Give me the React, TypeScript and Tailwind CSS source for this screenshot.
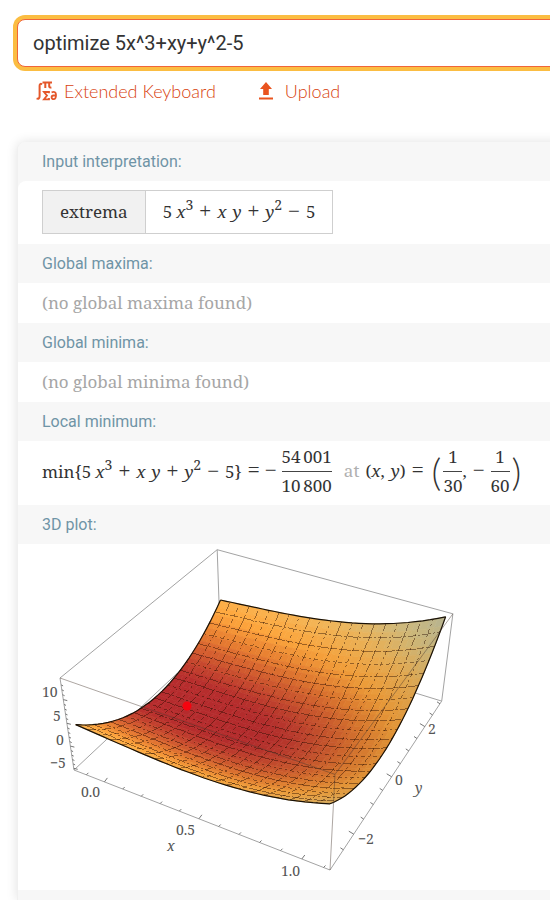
import type { ReactNode } from 'react';

/* ---------- surface plot ---------- */

const X_MIN = -0.17, X_SPAN = 1.3;
const Y_MIN = -3.12, Y_SPAN = 6.24;
const Z_MIN = -5.4, Z_SPAN = 19.8;

type Point = [number, number];

const f = (x: number, y: number) => 5 * x ** 3 + x * y + y * y - 5;

// perspective projection of the unit box
const project = (u: number, v: number, w: number): Point => {
  const d = 1 - 0.105 * u + 0.208 * v - 0.067 * w;
  return [
    (32 + 225.8 * u + 183.1 * v - 15.2 * w) / d,
    (226 + 65.8 * u - 118.5 * v - 101 * w) / d,
  ];
};

const onSurface = (u: number, v: number) => {
  const w = (f(X_MIN + u * X_SPAN, Y_MIN + v * Y_SPAN) - Z_MIN) / Z_SPAN;
  return { w, p: project(u, v, w) };
};

const STOPS: [number, number[]][] = [
  [0, [176, 40, 44]],
  [0.05, [180, 45, 44]],
  [0.13, [202, 82, 46]],
  [0.24, [228, 124, 48]],
  [0.37, [250, 164, 60]],
  [0.56, [244, 184, 90]],
  [0.75, [222, 198, 130]],
  [1, [200, 200, 166]],
];

const shade = (u: number, w: number) => {
  const t = Math.min(0.999, Math.max(0, w));
  const i = STOPS.findIndex(([s]) => s > t);
  const [s0, a] = STOPS[i - 1];
  const [s1, b] = STOPS[i];
  const k = (t - s0) / (s1 - s0);
  const light = 1.02 - 0.13 * u * u;
  return `rgb(${a.map((c, n) => Math.min(255, Math.round((c + (b[n] - c) * k) * light))).join(',')})`;
};

const N = 34;
const at = (i: number) => 0.02 + (0.96 * i) / N;
const pts = (list: Point[]) => list.map(([x, y]) => `${x.toFixed(1)},${y.toFixed(1)}`).join(' ');

const cells: { points: string; fill: string }[] = [];
for (let j = N - 1; j >= 0; j--) {
  for (let i = 0; i < N; i++) {
    const c = [
      onSurface(at(i), at(j)),
      onSurface(at(i + 1), at(j)),
      onSurface(at(i + 1), at(j + 1)),
      onSurface(at(i), at(j + 1)),
    ];
    cells.push({
      points: pts(c.map((q) => q.p)),
      fill: shade(at(i), c.reduce((s, q) => s + q.w, 0) / 4),
    });
  }
}

const steps = Array.from({ length: N + 1 }, (_, i) => at(i));
const alongX = (v: number) => pts(steps.map((u) => onSurface(u, v).p));
const alongY = (u: number) => pts(steps.map((v) => onSurface(u, v).p));
const mesh = Array.from({ length: 20 }, (_, i) => 0.02 + (0.96 * (i + 1)) / 21);
const DASHES = ['12 1 7 2', '9 2 2 2', '2 3 4 3'];

const tick = ([x, y]: Point, dx: number, dy: number) => `M${x.toFixed(1)} ${y.toFixed(1)}l${dx} ${dy}`;
const xTicks = Array.from({ length: 13 }, (_, i) => {
  const major = i % 5 === 1;
  return tick(project((i * 0.1 - 0.1 - X_MIN) / X_SPAN, 0, 0), major ? 3 : 2, major ? -4 : -2);
}).join('');
const yTicks = Array.from({ length: 12 }, (_, i) => {
  const major = i % 4 === 1;
  return tick(project(1, (i * 0.5 - 2.5 - Y_MIN) / Y_SPAN, 0), major ? -5 : -3, major ? -3 : -2);
}).join('');
const zTicks = Array.from({ length: 19 }, (_, i) =>
  tick(project(0, 0, (i - 5 - Z_MIN) / Z_SPAN), i % 5 === 0 ? 4 : 2, 1),
).join('');

const edge = (a: [number, number, number], b: [number, number, number]) => {
  const [x1, y1] = project(...a);
  const [x2, y2] = project(...b);
  return `M${x1.toFixed(1)} ${y1.toFixed(1)}L${x2.toFixed(1)} ${y2.toFixed(1)}`;
};

const box = [
  edge([0, 0, 0], [1, 0, 0]), edge([1, 0, 0], [1, 1, 0]), edge([1, 1, 0], [0, 1, 0]), edge([0, 1, 0], [0, 0, 0]),
  edge([1, 1, 1], [0, 1, 1]), edge([0, 1, 1], [0, 0, 1]),
  edge([0, 0, 0], [0, 0, 1]), edge([1, 1, 0], [1, 1, 1]), edge([0, 1, 0], [0, 1, 1]),
].join('');
// edges nearest to the viewer show faintly over the surface
const nearBox = edge([0, 0, 1], [1, 0, 1]) + edge([1, 0, 1], [1, 1, 1]) + edge([1, 0, 0], [1, 0, 1]);

const AXIS_LABELS = [
  { x: 0, y: 153, t: '10' },
  { x: 11, y: 177, t: '5' },
  { x: 14, y: 201, t: '0' },
  { x: 8, y: 224, t: '−5' },
  { x: 39, y: 253, t: '0.0' },
  { x: 134, y: 291, t: '0.5' },
  { x: 239, y: 332, t: '1.0' },
  { x: 386, y: 190, t: '2' },
  { x: 353, y: 241, t: '0' },
  { x: 316, y: 300, t: '−2' },
];

const SurfacePlot = () => (
  <svg width="420" height="336" viewBox="0 0 420 336" role="img" aria-label="3D plot" className="block overflow-visible">
    <path d={box} fill="none" stroke="#a3a3a3" />
    {cells.map((c, i) => (
      <polygon key={i} points={c.points} fill={c.fill} stroke={c.fill} strokeWidth="0.7" />
    ))}
    <g fill="none" stroke="#2a0d00" strokeOpacity="0.56" strokeWidth="0.8" shapeRendering="crispEdges">
      {mesh.map((m, i) => (
        <g key={m}>
          <polyline points={alongX(m)} strokeDasharray={DASHES[i % 3]} />
          <polyline points={alongY(m)} strokeDasharray={DASHES[(i + 1) % 3]} />
        </g>
      ))}
    </g>
    <g fill="none" stroke="#1a1208" strokeWidth="1.2">
      <polyline points={alongX(0.02)} />
      <polyline points={alongX(0.98)} />
      <polyline points={alongY(0.02)} />
      <polyline points={alongY(0.98)} />
    </g>
    <path d={nearBox} fill="none" stroke="#4a3a30" strokeOpacity="0.45" />
    <path d={xTicks + yTicks + zTicks} fill="none" stroke="#777" />
    <circle cx="145" cy="162" r="4.5" fill="#f5040f" />
    <g className="fill-[#555] font-['Noto_Serif','DejaVu_Serif_Condensed',serif] text-[14px]">
      {AXIS_LABELS.map((l) => (
        <text key={`${l.x}-${l.y}`} x={l.x} y={l.y}>{l.t}</text>
      ))}
      <text x="125" y="307" className="italic">x</text>
      <text x="373" y="249" className="italic">y</text>
    </g>
  </svg>
);

/* ---------- formulas ---------- */

const Sup = ({ children }: { children: ReactNode }) => (
  <sup className="top-0 align-[8px] text-[14px] leading-none not-italic">{children}</sup>
);

const Op = ({ children }: { children: ReactNode }) => (
  <span className="font-['Liberation_Serif',serif] text-[21px] leading-none">{children}</span>
);

const Polynomial = () => (
  <span className="flex items-baseline gap-[6px]">
    <span className="flex items-baseline gap-1">
      <span>5</span>
      <span><i>x</i><Sup>3</Sup></span>
    </span>
    <Op>+</Op>
    <i>x</i>
    <i>y</i>
    <Op>+</Op>
    <span><i>y</i><Sup>2</Sup></span>
    <Op>−</Op>
    <span>5</span>
  </span>
);

const Fraction = ({ top, bottom }: { top: string; bottom: string }) => (
  <span className="flex flex-col items-center text-center leading-7">
    <span className="w-full border-b border-[#444]">{top}</span>
    <span>{bottom}</span>
  </span>
);

const Paren = ({ children }: { children: ReactNode }) => (
  <span className="px-[2px] font-[Lato,sans-serif] text-[38px] leading-none font-light">{children}</span>
);

/* ---------- page ---------- */

const KeyboardIcon = () => (
  <svg width="22" height="20" viewBox="0 0 22 20" fill="none" stroke="#e4572a" strokeWidth="2" aria-hidden="true">
    <path d="M6 3.500C4.600 2.200 3.600 3 3.600 4.800V15C3.600 17.300 2.500 18.200 0.600 17.300" />
    <path d="M6.500 1.500H16M9.300 1.500V7M13.200 1.500V5.500Q13.200 6.800 15.400 6.400" />
    <path d="M13 12.300V11H8L11 14.600L8 18.300H13V17" strokeWidth="1.800" />
    <path d="M15.600 11.300Q20 9.800 20 14Q20 18.200 17.700 18.200Q15.600 18.200 15.600 16.300Q15.600 14.500 17.500 14.500H19.800" strokeWidth="1.800" />
  </svg>
);

const UploadIcon = () => (
  <svg width="16" height="18" viewBox="0 0 16 18" fill="#e9541f" aria-hidden="true">
    <path d="M8 0L14 7H10.800V13H5.200V7H2Z" />
    <path d="M1 15.500H15V17.500H1Z" />
  </svg>
);

const Pod = ({ title, className = 'h-10 items-center', children }: { title: string; className?: string; children: ReactNode }) => (
  <section>
    <h2 className="bg-[#f7f7f7] py-2 pl-6 text-base leading-[23px] text-[#6f94a6]">{title}</h2>
    <div className={`flex bg-white pl-6 font-['Noto_Serif','DejaVu_Serif_Condensed',serif] text-[17px] whitespace-nowrap text-[#333] ${className}`}>
      {children}
    </div>
  </section>
);

const App = () => {
  return (
    <div className="overflow-hidden bg-white pt-[19px] font-[Roboto,sans-serif]">
      {/* Query */}
      <form className="-mr-4 ml-[17px]" onSubmit={(e) => e.preventDefault()}>
        <input
          type="text"
          aria-label="Query"
          defaultValue="optimize 5x^3+xy+y^2-5"
          className="block h-12 w-full rounded-lg border border-[#f0653a] bg-white px-[15px] text-xl text-[#333] shadow-[0_0_0_4px_#fbbd42] outline-none"
        />
      </form>
      <div className="mt-[11px] flex items-center gap-[42px] pl-9 font-[Lato,sans-serif] text-lg leading-[26px] font-light text-[#d8430f]">
        <button type="button" className="flex items-center gap-[6px]">
          <KeyboardIcon />
          Extended Keyboard
        </button>
        <button type="button" className="flex items-center gap-[11px]">
          <UploadIcon />
          Upload
        </button>
      </div>

      {/* Results */}
      <main className="mt-[38px] -mr-4 ml-[17px] overflow-hidden rounded-t-lg border-l border-[#f0f0f0] bg-[#f7f7f7] shadow-[0_0_12px_rgba(0,0,0,0.12)]">
        <Pod title="Input interpretation:" className="h-[63px] items-center rounded-tl-lg pb-[2px]">
          <div className="flex h-11 items-stretch border border-[#cfcfcf]">
            <span className="flex items-center border-r border-[#cfcfcf] bg-[#f1f1f1] px-[17px]">extrema</span>
            <span className="flex items-center px-[17px]"><Polynomial /></span>
          </div>
        </Pod>
        <Pod title="Global maxima:">
          <span className="text-[#a6a6a6]">(no global maxima found)</span>
        </Pod>
        <Pod title="Global minima:">
          <span className="text-[#a6a6a6]">(no global minima found)</span>
        </Pod>
        <Pod title="Local minimum:" className="h-16 items-center pb-1">
          <span className="flex items-baseline">
            <span>min{'{'}</span>
            <Polynomial />
            <span>{'}'}</span>
          </span>
          <span className="ml-[6px]"><Op>=</Op></span>
          <span className="mx-[5px]"><Op>−</Op></span>
          <Fraction top={'54\u2009001'} bottom={'10\u2009800'} />
          <span className="mr-[6px] ml-3 text-[#b0b0b0]">at</span>
          <span className="flex gap-[6px]">
            <span>(<i>x</i>,</span>
            <span><i>y</i>)</span>
          </span>
          <span className="mx-[6px]"><Op>=</Op></span>
          <Paren>(</Paren>
          <Fraction top="1" bottom="30" />
          <span>,</span>
          <span className="mx-[6px]"><Op>−</Op></span>
          <Fraction top="1" bottom="60" />
          <Paren>)</Paren>
        </Pod>
        <Pod title="3D plot:" className="h-[346px] items-start">
          <SurfacePlot />
        </Pod>
        <div className="h-[10px]" />
      </main>
    </div>
  );
};

export default App;
